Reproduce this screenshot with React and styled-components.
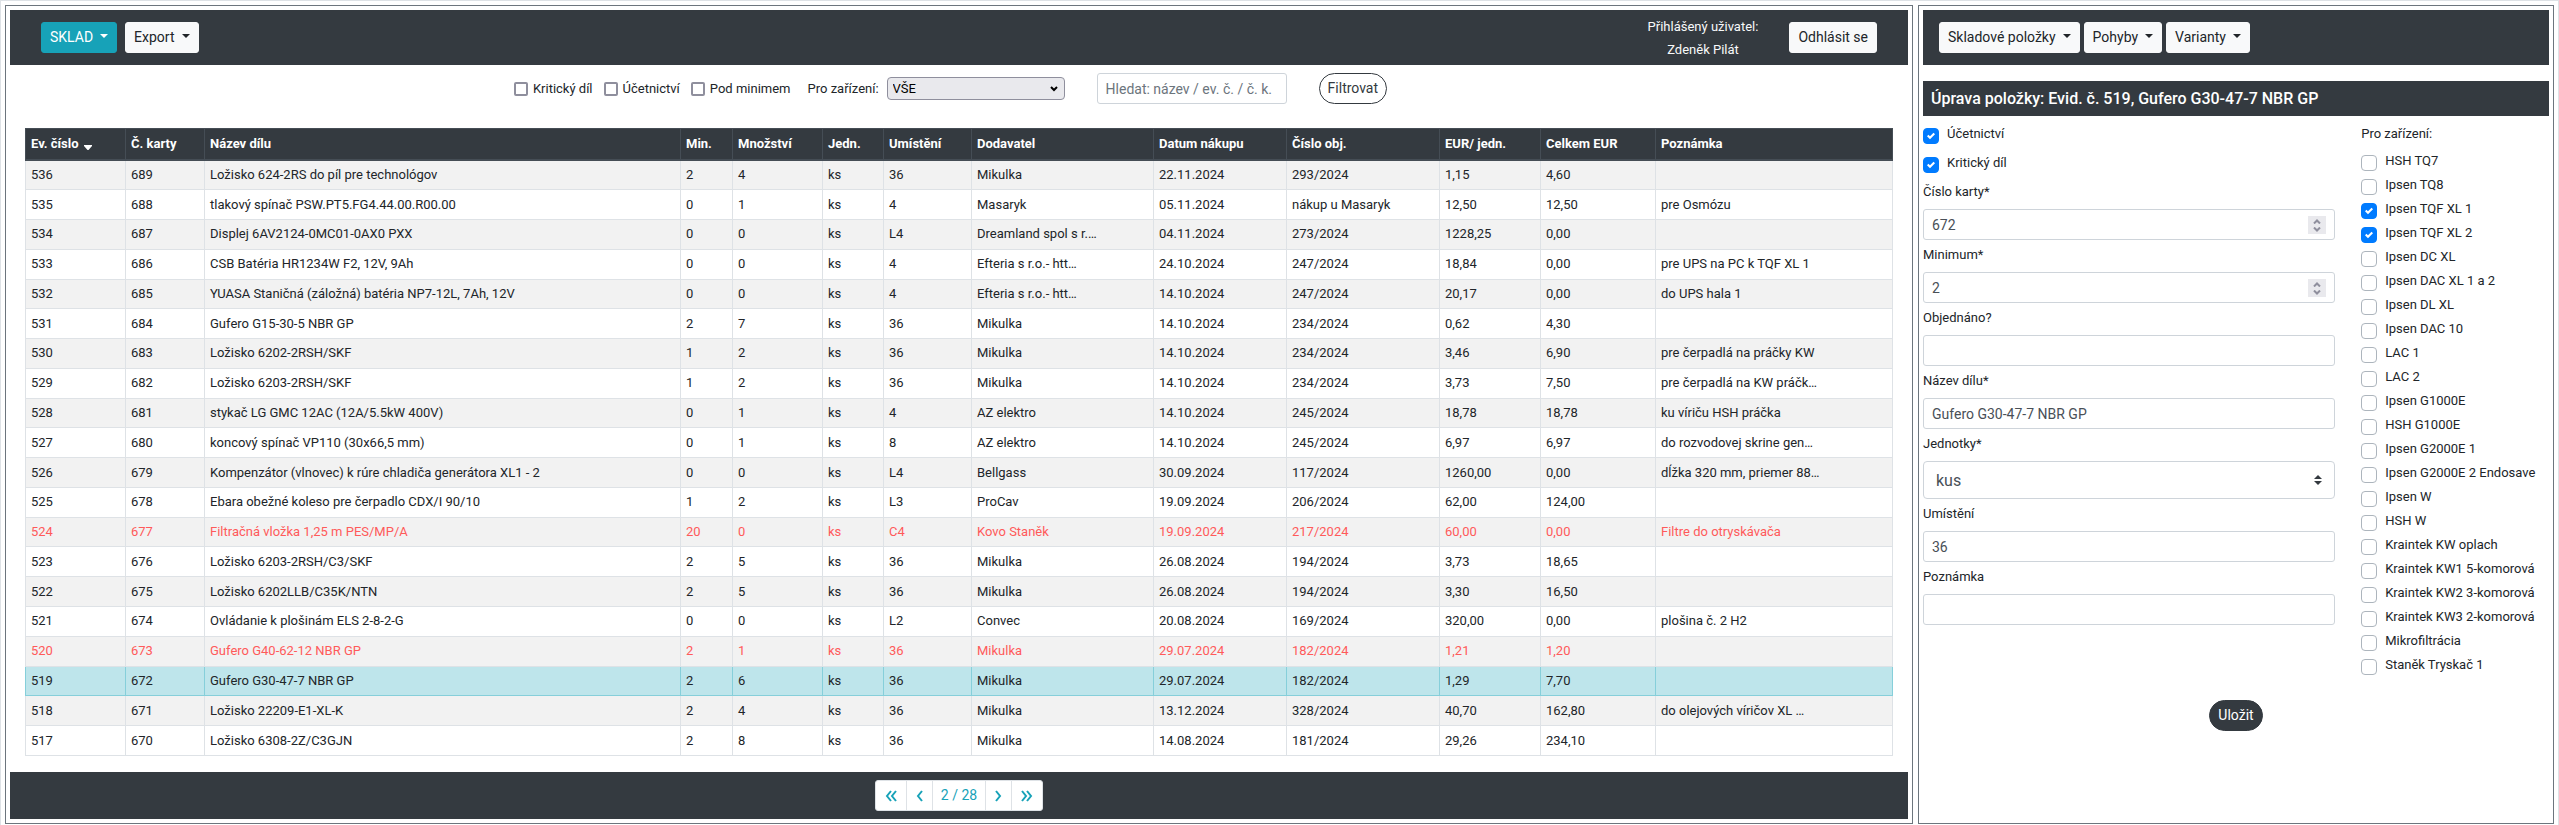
import React from "react";
import styled, { createGlobalStyle, css } from "styled-components";

const Global = createGlobalStyle`
  *, *::before, *::after { box-sizing: border-box; }
  html, body { margin: 0; background: #fff; }
  body { font-family: Roboto, sans-serif; font-size: 13px; line-height: 19px; color: #212529; }
  button, input, select { font-family: inherit; margin: 0; }
`;

const Shell = styled.div`
  display: grid;
  grid-template-columns: minmax(0, 3fr) minmax(0, 1fr);
  gap: 5px;
  padding: 4px 4px 1px;
  border: 1px solid #dee2e6;
  border-bottom: 0;
`;
const Panel = styled.section`
  border: 1px solid #6c757d;
  padding: 4px;
  min-width: 0;
`;
const NavBar = styled.nav`
  display: flex;
  align-items: center;
  gap: ${(p) => (p.$compact ? 4 : 8)}px;
  min-height: 55px;
  padding: 0 ${(p) => (p.$compact ? 16 : 31)}px;
  background: #343a40;
`;
const tones = {
  light: css`background: #f8f9fa; border-color: #f8f9fa; color: #212529;`,
  info: css`background: #17a2b8; border-color: #17a2b8; color: #fff;`,
  dark: css`background: #343a40; border-color: #343a40; color: #fff; border-radius: 16px;`,
  outline: css`background: #fff; border-color: #343a40; color: #343a40; border-radius: 16px;`,
};
const Button = styled.button`
  height: 31px;
  padding: 4px 8px;
  border: 1px solid;
  border-radius: 3px;
  font-size: 14px;
  line-height: 21px;
  white-space: nowrap;
  cursor: pointer;
  ${(p) => tones[p.$tone || "light"]}
`;
const MenuButton = styled(Button)`
  &::after {
    content: "";
    display: inline-block;
    margin-left: 7px;
    vertical-align: 4px;
    border: 4px solid transparent;
    border-top-color: currentColor;
    border-bottom: 0;
  }
`;
const UserInfo = styled.div`
  margin-left: auto;
  margin-right: 23px;
  line-height: 23px;
  text-align: center;
  color: #f8f9fa;
`;

const Filters = styled.form`
  display: flex;
  justify-content: center;
  align-items: center;
  padding: 8px 17px 24px 0;
`;
const FilterCheck = styled.label`
  display: flex;
  align-items: center;
  gap: 5px;
  margin-right: 11px;
`;
const PlainBox = styled.input.attrs({ type: "checkbox" })`
  appearance: none;
  width: 14px;
  height: 14px;
  border: 2px solid #8f8f9d;
  border-radius: 2px;
  background: #fff;
`;
const DeviceLabel = styled.label`
  margin: 0 8px 0 6px;
`;
const SelectWrap = styled.div`
  position: relative;
  display: flex;
  svg { position: absolute; pointer-events: none; top: 50%; transform: translateY(-50%); right: ${(p) => p.$inset}px; }
`;
const DeviceSelect = styled.select`
  appearance: none;
  width: 178px;
  height: 23px;
  padding: 0 5px;
  border: 1px solid #8f8f9d;
  border-radius: 4px;
  background: #e9e9ed;
  color: #000;
  font-size: 13px;
`;
const TextInput = styled.input`
  width: 100%;
  height: 31px;
  padding: 4px 8px;
  border: 1px solid #ced4da;
  border-radius: 3px;
  background: #fff;
  color: #495057;
  font-size: 14px;
  line-height: 21px;
  appearance: textfield;
  &::placeholder { color: #6c757d; opacity: 1; }
  &::-webkit-inner-spin-button { appearance: none; }
`;
const SearchInput = styled(TextInput)`
  width: 190px;
  margin: 0 32px;
`;

const Table = styled.table`
  width: calc(100% - 30px);
  height: 628px;
  margin: 0 15px 16px;
  border-collapse: collapse;
  table-layout: fixed;
`;
const HeadCell = styled.th`
  height: 31px;
  padding: 4px 5px 5px;
  border: 1px solid #454d55;
  border-bottom-width: 2px;
  background: #343a40;
  color: #fff;
  font-weight: 700;
  text-align: left;
  white-space: nowrap;
`;
const SortMark = styled.svg`
  margin-left: 4px;
  vertical-align: -3px;
`;
const Row = styled.tr`
  &:nth-child(odd) { background: #f2f2f2; }
  ${(p) => p.$low && css`color: #ff5a5a;`}
  ${(p) => p.$active && css`
    && { background: #bee5eb; }
    && td { border-color: #86cfda; border-top-color: #dee2e6; }
  `}
`;
const Cell = styled.td`
  padding: 4px 5px 5px;
  border: 1px solid #dee2e6;
  white-space: nowrap;
  overflow: hidden;
`;

const Footer = styled.footer`
  display: flex;
  justify-content: center;
  padding: 8px;
  background: #343a40;
`;
const PageButton = styled.button`
  display: flex;
  align-items: center;
  justify-content: center;
  width: ${(p) => p.$w}px;
  height: 31px;
  padding: 0;
  border: 1px solid #dee2e6;
  background: #fff;
  color: #17a2b8;
  font-size: 14px;
  line-height: 21px;
  & + & { margin-left: -1px; }
  &:first-child { border-radius: 3px 0 0 3px; }
  &:last-child { border-radius: 0 3px 3px 0; }
`;

const Title = styled.h1`
  margin: 16px 0 8px;
  padding: 8px;
  background: #343a40;
  color: #fff;
  font-size: 16px;
  font-weight: 500;
  line-height: 19px;
`;
const EditForm = styled.form`
  display: grid;
  grid-template-columns: minmax(0, 7fr) minmax(0, 3fr);
`;
const Fields = styled.div`
  padding-right: 26px;
`;
const Check = styled.label`
  display: flex;
  gap: 8px;
  height: 24px;
  margin-bottom: ${(p) => p.$after || 0}px;
  white-space: nowrap;
`;
const CheckMark = styled.span`
  position: relative;
  display: block;
  width: 16px;
  height: 16px;
  margin-top: 4px;
  input {
    appearance: none;
    display: block;
    width: 16px;
    height: 16px;
    border: 1px solid #adb5bd;
    border-radius: 4px;
    background: #fff;
  }
  input:checked { background: #007bff; border-color: #007bff; }
  svg { position: absolute; inset: 4px; pointer-events: none; }
`;
const Caption = styled.label`
  display: block;
  margin-bottom: 8px;
`;
const Group = styled.fieldset`
  margin: 0;
  padding: 0;
  border: 0;
  min-width: 0;
  legend { padding: 0; margin-bottom: 8px; }
`;
const Field = styled.div`
  margin-bottom: 5px;
`;
const InputWrap = styled.div`
  position: relative;
  display: flex;
`;
const Spinner = styled.span`
  position: absolute;
  top: 7px;
  right: 9px;
  width: 18px;
  height: 18px;
  padding: 3px 0 2px;
  display: flex;
  flex-direction: column;
  align-items: center;
  justify-content: space-between;
  background: #e9e9ed;
  color: #8f8f9d;
`;
const UnitSelect = styled.select`
  appearance: none;
  width: 100%;
  height: 38px;
  padding: 0 12px;
  border: 1px solid #ced4da;
  border-radius: 4px;
  background: #fff;
  color: #495057;
  font-size: 16px;
`;
const Submit = styled.div`
  grid-column: 1 / -1;
  display: flex;
  justify-content: center;
  padding-top: 21px;
`;

const columns = [
  ["Ev. číslo", 100], ["Č. karty", 79], ["Název dílu"], ["Min.", 52], ["Množství", 90], ["Jedn.", 61],
  ["Umístění", 88], ["Dodavatel", 182], ["Datum nákupu", 133], ["Číslo obj.", 153], ["EUR/ jedn.", 101],
  ["Celkem EUR", 115], ["Poznámka", 237],
];

const rows = [
  ["536", "689", "Ložisko 624-2RS do píl pre technológov", "2", "4", "ks", "36", "Mikulka", "22.11.2024", "293/2024", "1,15", "4,60", ""],
  ["535", "688", "tlakový spínač PSW.PT5.FG4.44.00.R00.00", "0", "1", "ks", "4", "Masaryk", "05.11.2024", "nákup u Masaryk", "12,50", "12,50", "pre Osmózu"],
  ["534", "687", "Displej 6AV2124-0MC01-0AX0 PXX", "0", "0", "ks", "L4", "Dreamland spol s r.…", "04.11.2024", "273/2024", "1228,25", "0,00", ""],
  ["533", "686", "CSB Batéria HR1234W F2, 12V, 9Ah", "0", "0", "ks", "4", "Efteria s r.o.- htt…", "24.10.2024", "247/2024", "18,84", "0,00", "pre UPS na PC k TQF XL 1"],
  ["532", "685", "YUASA Staničná (záložná) batéria NP7-12L, 7Ah, 12V", "0", "0", "ks", "4", "Efteria s r.o.- htt…", "14.10.2024", "247/2024", "20,17", "0,00", "do UPS hala 1"],
  ["531", "684", "Gufero G15-30-5 NBR GP", "2", "7", "ks", "36", "Mikulka", "14.10.2024", "234/2024", "0,62", "4,30", ""],
  ["530", "683", "Ložisko 6202-2RSH/SKF", "1", "2", "ks", "36", "Mikulka", "14.10.2024", "234/2024", "3,46", "6,90", "pre čerpadlá na práčky KW"],
  ["529", "682", "Ložisko 6203-2RSH/SKF", "1", "2", "ks", "36", "Mikulka", "14.10.2024", "234/2024", "3,73", "7,50", "pre čerpadlá na KW práčk…"],
  ["528", "681", "stykač LG GMC 12AC (12A/5.5kW 400V)", "0", "1", "ks", "4", "AZ elektro", "14.10.2024", "245/2024", "18,78", "18,78", "ku víriču HSH práčka"],
  ["527", "680", "koncový spínač VP110 (30x66,5 mm)", "0", "1", "ks", "8", "AZ elektro", "14.10.2024", "245/2024", "6,97", "6,97", "do rozvodovej skrine gen…"],
  ["526", "679", "Kompenzátor (vlnovec) k rúre chladiča generátora XL1 - 2", "0", "0", "ks", "L4", "Bellgass", "30.09.2024", "117/2024", "1260,00", "0,00", "dĺžka 320 mm, priemer 88…"],
  ["525", "678", "Ebara obežné koleso pre čerpadlo CDX/I 90/10", "1", "2", "ks", "L3", "ProCav", "19.09.2024", "206/2024", "62,00", "124,00", ""],
  ["524", "677", "Filtračná vložka 1,25 m PES/MP/A", "20", "0", "ks", "C4", "Kovo Staněk", "19.09.2024", "217/2024", "60,00", "0,00", "Filtre do otryskávača"],
  ["523", "676", "Ložisko 6203-2RSH/C3/SKF", "2", "5", "ks", "36", "Mikulka", "26.08.2024", "194/2024", "3,73", "18,65", ""],
  ["522", "675", "Ložisko 6202LLB/C35K/NTN", "2", "5", "ks", "36", "Mikulka", "26.08.2024", "194/2024", "3,30", "16,50", ""],
  ["521", "674", "Ovládanie k plošinám ELS 2-8-2-G", "0", "0", "ks", "L2", "Convec", "20.08.2024", "169/2024", "320,00", "0,00", "plošina č. 2 H2"],
  ["520", "673", "Gufero G40-62-12 NBR GP", "2", "1", "ks", "36", "Mikulka", "29.07.2024", "182/2024", "1,21", "1,20", ""],
  ["519", "672", "Gufero G30-47-7 NBR GP", "2", "6", "ks", "36", "Mikulka", "29.07.2024", "182/2024", "1,29", "7,70", ""],
  ["518", "671", "Ložisko 22209-E1-XL-K", "2", "4", "ks", "36", "Mikulka", "13.12.2024", "328/2024", "40,70", "162,80", "do olejových víričov XL …"],
  ["517", "670", "Ložisko 6308-2Z/C3GJN", "2", "8", "ks", "36", "Mikulka", "14.08.2024", "181/2024", "29,26", "234,10", ""],
];
const lowStock = ["524", "520"];

const devices = [
  "HSH TQ7", "Ipsen TQ8", "Ipsen TQF XL 1", "Ipsen TQF XL 2", "Ipsen DC XL", "Ipsen DAC XL 1 a 2", "Ipsen DL XL",
  "Ipsen DAC 10", "LAC 1", "LAC 2", "Ipsen G1000E", "HSH G1000E", "Ipsen G2000E 1", "Ipsen G2000E 2 Endosave",
  "Ipsen W", "HSH W", "Kraintek KW oplach", "Kraintek KW1 5-komorová", "Kraintek KW2 3-komorová",
  "Kraintek KW3 2-komorová", "Mikrofiltrácia", "Staněk Tryskač 1",
];
const checkedDevices = ["Ipsen TQF XL 1", "Ipsen TQF XL 2"];

function CheckField({ text, checked, after }) {
  return (
    <Check $after={after}>
      <CheckMark>
        <input type="checkbox" defaultChecked={checked} />
        {checked && (
          <svg width="8" height="8" viewBox="0 0 8 8" fill="#fff">
            <path d="M6.564.75l-3.59 3.612-1.538-1.55L0 4.26l2.974 2.99L8 2.193z" />
          </svg>
        )}
      </CheckMark>
      {text}
    </Check>
  );
}

function NumberField({ id, value }) {
  return (
    <InputWrap>
      <TextInput id={id} type="number" defaultValue={value} />
      <Spinner aria-hidden="true">
        <svg width="8" height="5" viewBox="0 0 8 5" fill="none" stroke="currentColor" strokeWidth="2"><path d="M1 4.5l3-3 3 3" /></svg>
        <svg width="8" height="5" viewBox="0 0 8 5" fill="none" stroke="currentColor" strokeWidth="2"><path d="M1 .5l3 3 3-3" /></svg>
      </Spinner>
    </InputWrap>
  );
}

function Chevrons({ double, right }) {
  const w = double ? 12 : 7;
  return (
    <svg width={w} height="12" viewBox={`0 0 ${w} 12`} fill="none" stroke="currentColor" strokeWidth="2"
      transform={right ? "scale(-1 1)" : undefined}>
      <path d="M6 1L2 6l4 5" />
      {double && <path d="M11 1L7 6l4 5" />}
    </svg>
  );
}

export default function App() {
  return (
    <>
      <Global />
      <Shell>
        <Panel>
          <NavBar>
            <MenuButton $tone="info">SKLAD</MenuButton>
            <MenuButton>Export</MenuButton>
            <UserInfo>Přihlášený uživatel:<br />Zdeněk Pilát</UserInfo>
            <Button>Odhlásit se</Button>
          </NavBar>
          <Filters onSubmit={(e) => e.preventDefault()}>
            <FilterCheck><PlainBox />Kritický díl</FilterCheck>
            <FilterCheck><PlainBox />Účetnictví</FilterCheck>
            <FilterCheck><PlainBox />Pod minimem</FilterCheck>
            <DeviceLabel htmlFor="device">Pro zařízení:</DeviceLabel>
            <SelectWrap $inset={7}>
              <DeviceSelect id="device"><option>VŠE</option></DeviceSelect>
              <svg width="8" height="6" viewBox="0 0 8 6" fill="none" stroke="#000" strokeWidth="2"><path d="M1 1l3 3 3-3" /></svg>
            </SelectWrap>
            <SearchInput aria-label="Hledat" placeholder="Hledat: název / ev. č. / č. k." />
            <Button $tone="outline">Filtrovat</Button>
          </Filters>
          <Table>
            <colgroup>
              {columns.map(([name, width]) => <col key={name} width={width} />)}
            </colgroup>
            <thead>
              <tr>
                {columns.map(([name], i) => (
                  <HeadCell key={name}>
                    {name}
                    {i === 0 && <SortMark width="10" height="6" viewBox="0 0 10 6" fill="#fff"><path d="M1 0h8v1L5.500 5h-1L1 1z" /></SortMark>}
                  </HeadCell>
                ))}
              </tr>
            </thead>
            <tbody>
              {rows.map((r) => (
                <Row key={r[0]} $low={lowStock.includes(r[0])} $active={r[0] === "519"}>
                  {r.map((v, i) => <Cell key={i}>{v}</Cell>)}
                </Row>
              ))}
            </tbody>
          </Table>
          <Footer>
            <PageButton $w={32} aria-label="První"><Chevrons double /></PageButton>
            <PageButton $w={27} aria-label="Předchozí"><Chevrons /></PageButton>
            <PageButton $w={54}>2 / 28</PageButton>
            <PageButton $w={27} aria-label="Další"><Chevrons right /></PageButton>
            <PageButton $w={32} aria-label="Poslední"><Chevrons double right /></PageButton>
          </Footer>
        </Panel>
        <Panel>
          <NavBar $compact>
            <MenuButton>Skladové položky</MenuButton>
            <MenuButton>Pohyby</MenuButton>
            <MenuButton>Varianty</MenuButton>
          </NavBar>
          <Title>Úprava položky: Evid. č. 519, Gufero G30-47-7 NBR GP</Title>
          <EditForm onSubmit={(e) => e.preventDefault()}>
            <Fields>
              <CheckField text="Účetnictví" checked after={5} />
              <CheckField text="Kritický díl" checked after={5} />
              <Field><Caption htmlFor="card">Číslo karty*</Caption><NumberField id="card" value="672" /></Field>
              <Field><Caption htmlFor="min">Minimum*</Caption><NumberField id="min" value="2" /></Field>
              <Field><Caption htmlFor="ordered">Objednáno?</Caption><TextInput id="ordered" /></Field>
              <Field><Caption htmlFor="name">Název dílu*</Caption><TextInput id="name" defaultValue="Gufero G30-47-7 NBR GP" /></Field>
              <Field>
                <Caption htmlFor="unit">Jednotky*</Caption>
                <SelectWrap $inset={13}>
                  <UnitSelect id="unit"><option>kus</option></UnitSelect>
                  <svg width="8" height="10" viewBox="0 0 4 5" fill="#343a40"><path d="M2 0L0 2h4zm0 5L0 3h4z" /></svg>
                </SelectWrap>
              </Field>
              <Field><Caption htmlFor="place">Umístění</Caption><TextInput id="place" defaultValue="36" /></Field>
              <Field><Caption htmlFor="note">Poznámka</Caption><TextInput id="note" /></Field>
            </Fields>
            <Group>
              <legend>Pro zařízení:</legend>
              {devices.map((d) => <CheckField key={d} text={d} checked={checkedDevices.includes(d)} />)}
            </Group>
            <Submit><Button $tone="dark">Uložit</Button></Submit>
          </EditForm>
        </Panel>
      </Shell>
    </>
  );
}
